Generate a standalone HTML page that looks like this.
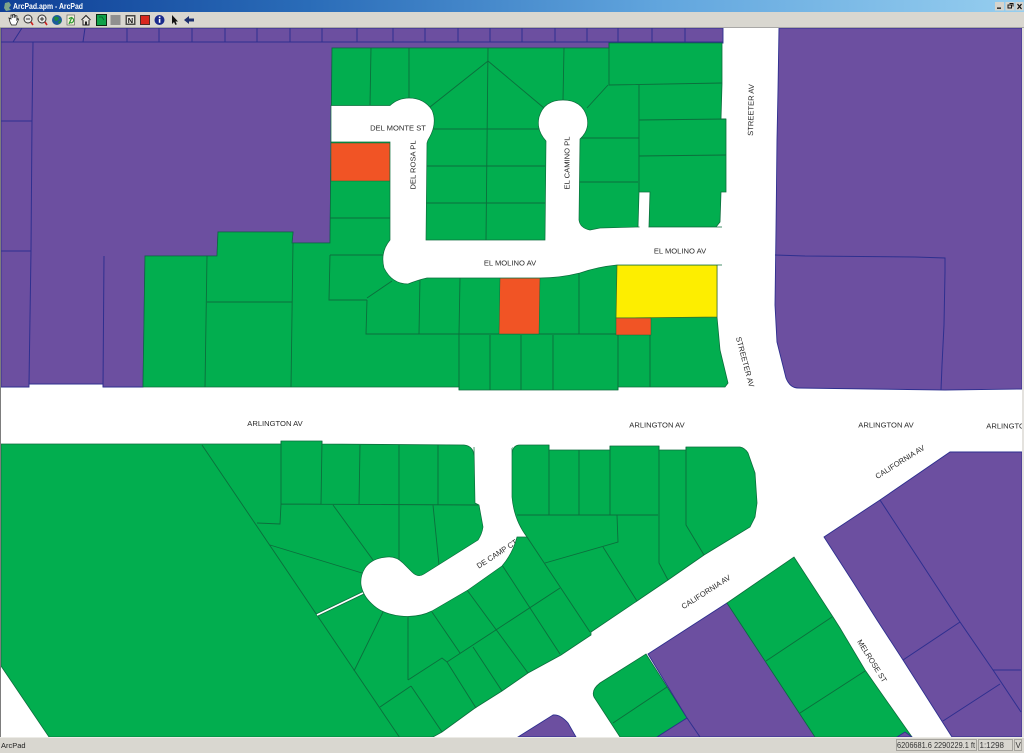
<!DOCTYPE html>
<html>
<head>
<meta charset="utf-8">
<title>ArcPad.apm - ArcPad</title>
<style>
html,body{margin:0;padding:0;background:#fff;overflow:hidden}
body{width:1024px;height:753px}
svg{display:block}
text{font-family:"Liberation Sans",sans-serif}
.l text,text.l{font-size:7.6px;fill:#2a2a2a;text-anchor:middle;dominant-baseline:central}
.g{fill:#02ae4f;stroke:#0c6e3c;stroke-width:.8}
.p{fill:#6c4fa0;stroke:#2e2f8f;stroke-width:.9}
.gl{fill:none;stroke:#0c6e3c;stroke-width:.9}
.pl{fill:none;stroke:#2e2f8f;stroke-width:1}
.r{fill:#f15425;stroke:#0c6e3c;stroke-width:.5}
</style>
</head>
<body>
<svg width="1024" height="753" viewBox="0 0 1024 753" xmlns="http://www.w3.org/2000/svg">
<defs>
<linearGradient id="tb" x1="0" x2="1" y1="0" y2="0">
<stop offset="0" stop-color="#0f3f96"/><stop offset=".3" stop-color="#2a6cb8"/><stop offset=".65" stop-color="#62a6de"/><stop offset="1" stop-color="#96ceef"/>
</linearGradient>
<clipPath id="dc"><path d="M473,440 L473,455 L475,503 L479,505 L483,527 Q482,534 478,540 L424,574 Q418,578 412,572 L403,563 Q396,556 387,557 Q372,558 365,568 Q360,576 361,585 Q363,596 372,604 Q382,614 400,616 Q418,618 432,611 L468,590 L502,566 Q513,553 517,537 L527,537 Q514,520 512,497 L512,452 L512,440 Z"/></clipPath>
</defs>
<rect width="1024" height="753" fill="#fff"/>

<!-- purple NW -->
<path class="p" d="M1,28 L723,28 L723,43 L609,43 L609,48 L332,48 L330,243 L292,243 L293,232 L218,232 L217,256 L145,256 L143,387 L103,387 L103,384 L29,384 L29,387 L1,387 Z"/>
<path class="pl" d="M1,42 L723,42 M22,28 L13,42 M85,28 L83,42 M127,28 L127,42 M159,28 L159,42 M192,28 L192,42 M225,28 L225,42 M257,28 L257,42 M290,28 L290,42 M322,28 L322,42 M357,28 L357,42 M393,28 L393,42 M425,28 L425,42 M458,28 L458,42 M490,28 L490,42 M522,28 L522,42 M555,28 L555,42 M587,28 L587,42 M618,28 L618,42 M652,28 L652,42 M685,28 L685,42 M33,42 L32,121 L31,251 L29,384 M1,121 L32,121 M1,251 L31,251 M104,256 L103,387"/>

<!-- purple E -->
<path class="p" d="M779,28 L1022,28 L1022,389 L945,390 L798,388 Q790,388 786,378 L777,342 L775,305 L776,230 L777,140 L778,90 Z"/>
<path class="pl" d="M775,255 L805,256 L915,257 L945,258 L945,272 L944,325 L942,365 L941,390"/>

<!-- green north -->
<path class="g" d="M332,48 L609,48 L609,43 L722,43 L722,84 L721,119 L726,119 L726,192 L721,192 L720,222 L716,227 L649,227 L650,192 L639,192 L638,227 L638,250 L717,250 L717,317 L720,350 L728,383 L725,387 L618,387 L618,390 L459,390 L459,387 L143,387 L145,256 L217,256 L218,232 L293,232 L292,243 L330,243 Z"/>
<path class="gl" d="M371,48 L370,105 M409,48 L409,100 M488,48 L486,240 M488,61 L430,107 M488,61 L544,108 M564,48 L563,100 M587,108 L608,85 M609,43 L609,85 L722,83 M639,85 L639,192 M639,120 L726,119 M639,156 L726,155 M579,138 L639,138 M579,182 L638,182 M430,129 L542,129 M426,166 L545,166 M426,203 L545,203 M330,218 L390,218 M330,255 L388,255 M330,255 L329,300 L367,300 M367,298 L392,281 M367,300 L366,334 L617,334 M420,278 L419,334 M460,278 L459,334 L459,390 M579,273 L579,334 M618,335 L618,390 M650,335 L650,387 M490,335 L490,390 M521,335 L521,390 M553,335 L553,390 M207,256 L205,387 M207,302 L292,302 M293,243 L291,387"/>
<rect x="331" y="143" width="59" height="38" class="r"/>
<path class="r" d="M500,278 L540,278 L539,334 L499,334 Z"/>
<path d="M617,265 L717,265 L717,317 L616,318 Z" fill="#fdee00" stroke="#3c6a20" stroke-width=".7"/>
<rect x="616" y="318" width="35" height="17" class="r"/>

<!-- north road -->
<path fill="#fff" stroke="#0c6e3c" stroke-width=".7" d="M722,265 L717,265 L617,265 Q597,267 580,273 Q560,278 540,278 L427,278 Q418,280 408,284 Q392,284 384,268 Q380,252 390,240 L390,142 L331,142 L331,105.5 L390,105.5 Q398,98 409,98 Q424,98 432,110 Q438,124 428,140 L427,143 L426,240 L545,240 L546,141 Q536,130 539,117 Q544,100 563,100 Q582,100 587,117 Q590,130 580,139 L579,220 Q580,228 590,230 L600,228 L638,227 L649,227 L716,227 L722,227"/>
<rect x="639.5" y="224" width="9" height="6" fill="#fff"/>

<!-- green south-west -->
<path class="g" d="M1,444 L281,444 L281,441 L322,441 L322,444 L464,445 Q473,446 474,455 L512,455 Q512,445 520,445 L549,445 L549,450 L610,450 L610,446 L659,446 L659,450 L686,450 L686,447 L740,447 Q745,448 748,453 L755,473 L757,503 L755,517 L750,527 L704,555 L668,580 L637,601 L591,632 L591,635 L561,655 L528,673 L502,691 L475,708 L442,732 L433,737 L49,737 L1,666 Z"/>
<path class="gl" d="M202,445 L400,738 M281,441 L281,504 L280,524 L257,523 M281,504 L478,505 M322,441 L321,504 M360,445 L359,505 M399,445 L399,560 M438,445 L438,505 M433,505 L439,565 M333,505 L373,560 M270,545 L362,573 M549,445 L549,515 M579,450 L579,515 M610,446 L610,515 M659,446 L659,563 L668,580 M686,447 L686,525 L704,555 M517,515 L658,515 M617,515 L618,542 L545,563 M527,537 L590,632 M603,547 L637,601 M502,565 L560,654 M467,590 L528,673 M432,612 L460,653 M473,647 L502,691 M560,588 L447,662 L442,658 L408,680 M411,686 L380,707 M411,686 L442,732 M447,662 L476,708 M408,616 L408,680 M383,612 L354,671"/>

<!-- south road -->
<path fill="#fff" stroke="#0c6e3c" stroke-width=".7" d="M474,447 L475,503 L479,505 L483,527 Q482,534 478,540 L424,574 Q418,578 412,572 L403,563 Q396,556 387,557 Q372,558 365,568 Q360,576 361,585 Q363,596 372,604 Q382,614 400,616 Q418,618 432,611 L468,590 L502,566 Q513,553 517,537 L527,537 Q514,520 512,497 L512,447"/>
<rect x="475" y="440" width="37" height="8" fill="#fff"/>
<path d="M317,615 L363,593" stroke="#0c6e3c" stroke-width="3.2" fill="none"/>
<path d="M317,615 L363,593" stroke="#fff" stroke-width="1.8" fill="none"/>

<!-- south-east blocks -->
<path class="g" d="M646,654 L687,718 L657,737 L620,737 L594,697 Q591,690 600,683 Z"/>
<path class="gl" d="M667,687 L613,723"/>
<path class="p" d="M648,654 L727,603 L815,737 L657,737 L687,718 Z"/>
<path class="pl" d="M687,718 L700,737"/>
<path class="g" d="M727,603 L794,557 L833,617 L840,628 L865,670 L912,737 L815,737 Z"/>
<path class="gl" d="M832,617 L766,661 M865,671 L800,713"/>
<path class="p" d="M897,737 L905,732 L912,737 Z"/>
<path class="p" d="M518,737 L553,715 Q560,714 568,723 L576,737 Z"/>
<path class="p" d="M824,537 L880,500 L950,452 L1022,452 L1022,737 L952,737 L903,660 L877,620 L853,582 Z"/>
<path class="pl" d="M880,500 L960,622 L993,670 L1021,712 M960,622 L903,660 M993,670 L1021,670 M1000,684 L943,721"/>

<!-- labels -->
<g class="l">
<text x="398" y="128">DEL MONTE ST</text>
<text transform="translate(413,165) rotate(-90)">DEL ROSA PL</text>
<text transform="translate(567,163) rotate(-90)">EL CAMINO PL</text>
<text x="510" y="263">EL MOLINO AV</text>
<text x="680" y="251">EL MOLINO AV</text>
<text transform="translate(751,110) rotate(-89)">STREETER AV</text>
<text transform="translate(745,362) rotate(75)">STREETER AV</text>
<text x="275" y="423.5">ARLINGTON AV</text>
<text x="657" y="425">ARLINGTON AV</text>
<text x="886" y="425">ARLINGTON AV</text>
<text x="1014" y="426">ARLINGTON AV</text>
<text transform="translate(900,462) rotate(-32)">CALIFORNIA AV</text>
<text transform="translate(706,592) rotate(-32.5)">CALIFORNIA AV</text>
<text transform="translate(872,661) rotate(58)">MELROSE ST</text>
<g clip-path="url(#dc)"><text transform="translate(497,554) rotate(-33)">DE CAMP CT</text></g>
</g>

<rect x="0" y="28" width="1" height="710" fill="#7d7d7d"/>
<rect x="1022" y="28" width="2" height="710" fill="#e4e2de"/>

<!-- title bar -->
<rect width="1024" height="12" fill="url(#tb)"/>
<rect x="0" y="12" width="1024" height="16" fill="#d9d7d0"/>
<rect x="0" y="27" width="1024" height="1" fill="#a9a8a6"/>
<path d="M5,3 L9,2 L11,5 L9,8 L11,10 L6,11 L4,8 Z" fill="#7fa58a"/>
<text x="13" y="9" font-size="8" font-weight="bold" fill="#fff" textLength="70" lengthAdjust="spacingAndGlyphs">ArcPad.apm - ArcPad</text>
<g>
<rect x="995" y="2" width="9" height="8.5" fill="#d6d4cd"/>
<rect x="997" y="7.5" width="4" height="1.3" fill="#111"/>
<rect x="1005.5" y="2" width="9" height="8.5" fill="#d6d4cd"/>
<path d="M1008,5 h3.5 v3 h-3.5 z M1009.5,3.5 h3.5 v3" fill="none" stroke="#111" stroke-width="1"/>
<rect x="1015.5" y="2" width="8" height="8.5" fill="#d6d4cd"/>
<path d="M1017.5,4 L1021.5,9 M1021.5,4 L1017.5,9" stroke="#111" stroke-width="1.2"/>
</g>

<!-- toolbar -->
<g>
<!-- hand -->
<path d="M10,22 L9,18 L11,19 L11,15 L12.5,15 L12.8,18 L13,14.5 L14.5,14.5 L14.8,18 L15.5,15.5 L17,16 L16.8,20 L18,18.5 L18.5,19.5 L16,25 L11.5,25 Z" fill="#fff" stroke="#222" stroke-width=".8"/>
<!-- zoom out -->
<circle cx="28" cy="19" r="4" fill="#e8e8e8" stroke="#333" stroke-width="1"/>
<path d="M26,19 h4" stroke="#333"/>
<path d="M31,22 L33,25" stroke="#c22" stroke-width="1.6"/>
<!-- zoom in -->
<circle cx="42" cy="19" r="4" fill="#e8e8e8" stroke="#333" stroke-width="1"/>
<path d="M40,19 h4 M42,17 v4" stroke="#333"/>
<path d="M45,22 L47,25" stroke="#c22" stroke-width="1.6"/>
<!-- globe -->
<circle cx="57" cy="20" r="5" fill="#1c5c9a"/>
<path d="M54,17 Q57,16 59,18 Q58,21 55,21 Z M58,22 l3,-2 v2 l-2,2 z" fill="#1c8a3c"/>
<!-- doc -->
<rect x="67" y="15" width="7.5" height="10" fill="#f2f2d8" stroke="#666" stroke-width=".7"/>
<path d="M69,19 a2.5,2.5 0 1 1 1,3.5 M69,24 L72,17" stroke="#2a9a30" stroke-width="1.2" fill="none"/>
<!-- house -->
<path d="M81.500,20 L86,15.500 L90.500,20 M83,20 V25 H89 V20" fill="#e8e6e0" stroke="#222" stroke-width="1"/>
<rect x="85" y="21.500" width="2" height="3.500" fill="#222"/>
<!-- green square -->
<rect x="96.500" y="14.500" width="10" height="11" fill="#0fa24a" stroke="#0b2a12" stroke-width="1"/>
<path d="M99,17 h3 l2,3" fill="none" stroke="#0a5a28" stroke-width=".8"/>
<!-- gray square -->
<rect x="110.500" y="15" width="10" height="10" fill="#8f8f8f"/>
<!-- N -->
<rect x="125.500" y="15" width="10" height="10" fill="#4a4a48"/>
<rect x="127" y="16.500" width="7" height="7" fill="#e8e6e0"/>
<text x="130.500" y="23" font-size="7.500" font-weight="bold" fill="#111" text-anchor="middle">N</text>
<!-- red -->
<rect x="140" y="15" width="10" height="10" fill="#4d2a26"/>
<rect x="141" y="16" width="8" height="8" fill="#d8281e"/>
<!-- info -->
<circle cx="159.500" cy="20" r="5" fill="#1a2a8c"/>
<rect x="158.800" y="18.800" width="1.600" height="4" fill="#fff"/>
<rect x="158.800" y="16.500" width="1.600" height="1.500" fill="#fff"/>
<!-- arrow -->
<path d="M172,15 L172,24 L174,22 L175.500,25 L176.800,24.300 L175.500,21.500 L178,21.500 Z" fill="#111"/>
<!-- back -->
<path d="M184,20 L189,16 V18.500 H194 V21.500 H189 V24 Z" fill="#1c2f6e"/>
</g>

<!-- status bar -->
<rect x="0" y="737" width="1024" height="16" fill="#d9d7d0"/>
<rect x="0" y="737" width="1024" height="1" fill="#ecebe6"/>
<text x="1" y="748" font-size="7.500" fill="#222">ArcPad</text>
<rect x="896.500" y="739.500" width="80" height="11" fill="none" stroke="#a5a39d"/>
<rect x="978.500" y="739.500" width="34" height="11" fill="none" stroke="#a5a39d"/>
<rect x="1014.500" y="739.500" width="7" height="11" fill="none" stroke="#a5a39d"/>
<text x="897" y="748" font-size="8" fill="#333" textLength="78" lengthAdjust="spacingAndGlyphs">6206681.6 2290229.1 ft</text>
<text x="979.500" y="748" font-size="8" fill="#333">1:1298</text>
<text x="1015.500" y="748" font-size="8" fill="#333">V</text>
</svg>
</body>
</html>
